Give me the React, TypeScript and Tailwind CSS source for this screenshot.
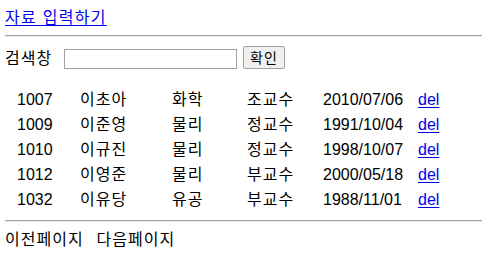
const rows = [
  { id: "1007", name: "이초아", dept: "화학", pos: "조교수", date: "2010/07/06" },
  { id: "1009", name: "이준영", dept: "물리", pos: "정교수", date: "1991/10/04" },
  { id: "1010", name: "이규진", dept: "물리", pos: "정교수", date: "1998/10/07" },
  { id: "1012", name: "이영준", dept: "물리", pos: "부교수", date: "2000/05/18" },
  { id: "1032", name: "이유당", dept: "유공", pos: "부교수", date: "1988/11/01" },
];

function Rule() {
  return <div className="h-[2px] border-t border-t-[#a0a0a0] border-b border-b-[#eeeeee]" />;
}

export default function App() {
  return (
    <div className="min-h-[258px] bg-white pl-[5px] font-['Liberation_Sans','Noto_Sans_CJK_KR',sans-serif] text-[16px] text-black">
      {/* top link */}
      <div className="h-[35px] pt-[8px] leading-[20px]">
        <a href="#" className="tracking-[1.3px] text-[#0000ee] underline underline-offset-[2px]">
          자료 입력하기
        </a>
      </div>
      <Rule />

      {/* search */}
      <div className="mt-[9px] flex h-[23px] items-end">
        <span className="w-[59px] self-center pt-[2px] leading-[20px] tracking-[1px]">검색창</span>
        <input
          type="text"
          className="h-[20px] w-[173px] border border-[#a0a0a0] bg-white px-1 outline-none"
        />
        <button
          type="button"
          className="ml-[6px] h-[23px] w-[42px] rounded-[2px] border border-[#a0a0a0] bg-[#f0f0f0] text-[14px] leading-[20px] tracking-[1px]"
        >
          확인
        </button>
      </div>

      {/* list */}
      <div className="mt-[18px] pl-[12px]">
        {rows.map((r) => (
          <div key={r.id} className="flex h-[25px] items-center leading-[20px]">
            <span className="w-[63px]">{r.id}</span>
            <span className="w-[92px] tracking-[1px]">{r.name}</span>
            <span className="w-[75px] tracking-[1px]">{r.dept}</span>
            <span className="w-[76px] tracking-[1px]">{r.pos}</span>
            <span className="w-[95px]">{r.date}</span>
            <a href="#" className="text-[#0000ee] underline underline-offset-[2px]">
              del
            </a>
          </div>
        ))}
      </div>

      <div className="mt-[8px]">
        <Rule />
      </div>

      {/* paging */}
      <div className="mt-[8px] flex gap-[13px] leading-[20px] tracking-[1px]">
        <span>이전페이지</span>
        <span>다음페이지</span>
      </div>
    </div>
  );
}
